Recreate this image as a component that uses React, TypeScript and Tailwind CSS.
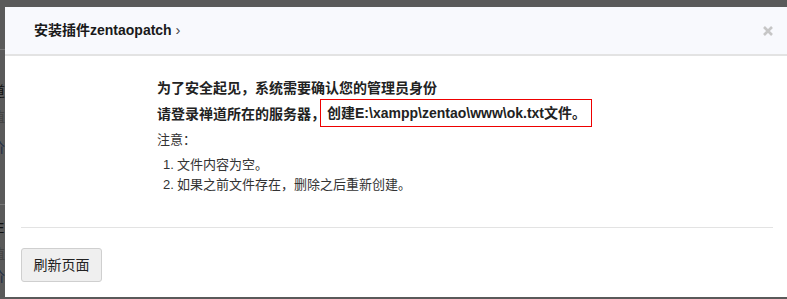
const font = "font-['Liberation_Sans','Noto_Sans_CJK_SC',sans-serif]";

function SideStrip() {
    // the page behind the dialog, mostly hidden
    return (
        <div className="w-[5px] shrink-0 overflow-hidden flex flex-col text-[14px] leading-none">
            <div className="h-[42px]" />
            <div className="h-px bg-[#777]" />
            <div className="h-[34px]" />
            <span className="-ml-[9px] h-[26px] text-[#111]">道</span>
            <span className="-ml-[9px] h-[30px] text-[#444]">值</span>
            <span className="-ml-[9px] h-[64px] text-[#1d2a44]">价</span>
            <div className="h-px bg-[#777]" />
            <div className="h-[16px]" />
            <span className="-ml-[5px] h-[26px] text-[#111]">E</span>
            <span className="-ml-[9px] h-[22px] text-[#444]">值</span>
            <span className="-ml-[9px] h-[20px] text-[#1d2a44]">价</span>
        </div>
    );
}

export default function App() {
    return (
        <div className={`w-[787px] h-[299px] bg-[#5a5a5a] overflow-hidden flex pt-[7px] ${font}`}>
            <SideStrip />

            <div className="w-[784px] shrink-0 h-[290px] bg-white flex flex-col">

                <div className="h-[47px] bg-[#f8f9fd] border-b-2 border-[#e3e3e3] flex items-center justify-between pl-[29px] pr-[16px] box-content">
                    <p className="text-[14px] font-bold text-[#1a1a1a]">
                        安装插件zentaopatch <span className="text-[#444] text-[15px] font-normal">›</span>
                    </p>
                    <svg width="10" height="10" viewBox="0 0 10 10" className="mt-[1px]">
                        <path d="M1 1 L9 9 M9 1 L1 9" stroke="#c6c6c6" strokeWidth="2.6" strokeLinecap="butt" />
                    </svg>
                </div>

                <div className="pl-[152px] pt-[19px] h-[171px] text-[#222]">
                    <p className="h-[26px] leading-[26px] text-[14px] font-bold">为了安全起见，系统需要确认您的管理员身份</p>
                    <div className="h-[26px] flex items-center text-[14px] font-bold">
                        <span>请登录禅道所在的服务器，</span>
                        <span className="h-[28px] -mt-[2px] flex items-center border border-[#e00] pl-[6px] pr-[5px] -ml-[5px]">创建E:\xampp\zentao\www\ok.txt文件。</span>
                    </div>
                    <p className="h-[26px] leading-[26px] text-[13px] text-[#333]">注意：</p>
                    <ol className="mt-[2px] text-[13px] text-[#333] pl-[6px]">
                        <li className="flex h-[20px] items-center"><span className="w-[14px]">1.</span>文件内容为空。</li>
                        <li className="flex h-[20px] items-center"><span className="w-[14px]">2.</span>如果之前文件存在，删除之后重新创建。</li>
                    </ol>
                </div>

                <div className="mx-[16px] border-t border-[#e3e3e3] pt-[20px]">
                    <button className="w-[81px] h-[34px] bg-[#efefef] border border-[#cfcfcf] rounded-[3px] text-[14px] text-[#222]">
                        刷新页面
                    </button>
                </div>

            </div>
        </div>
    );
}
